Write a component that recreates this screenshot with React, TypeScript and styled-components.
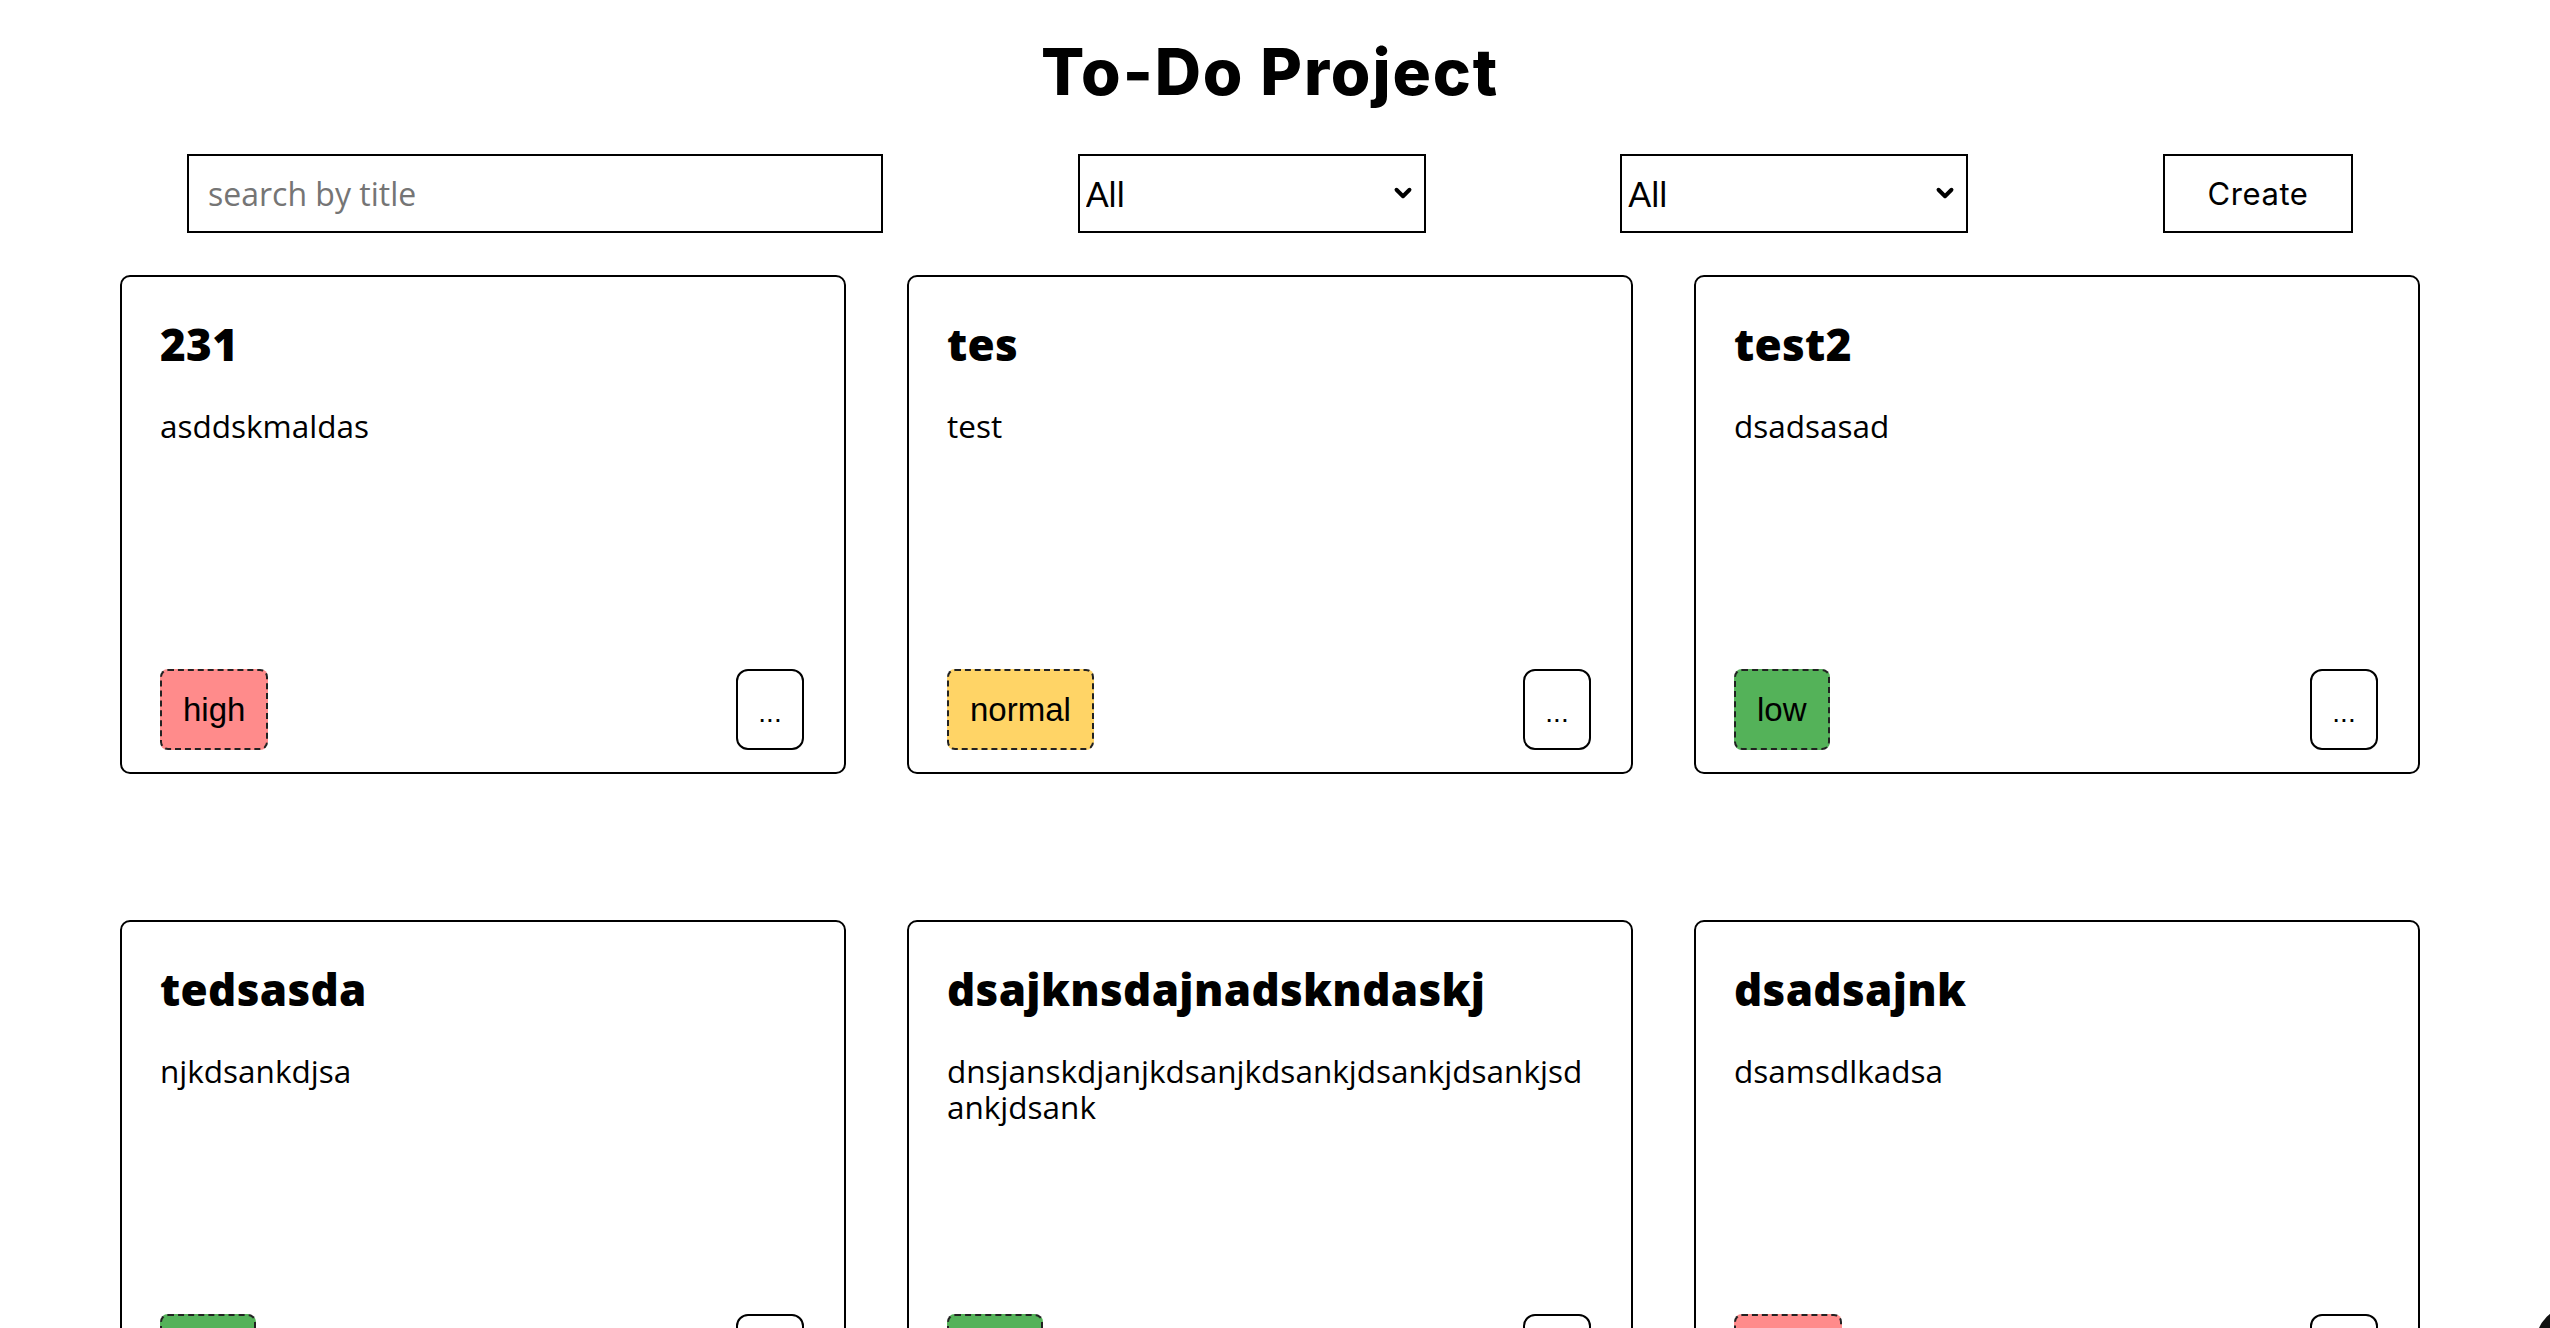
import styled, { createGlobalStyle } from "styled-components";
import { ChevronDown } from "lucide-react";

type Priority = "high" | "normal" | "low";

interface Todo {
  id: number;
  title: string;
  description: string;
  priority: Priority;
}

const todos: Todo[] = [
  { id: 1, title: "231", description: "asddskmaldas", priority: "high" },
  { id: 2, title: "tes", description: "test", priority: "normal" },
  { id: 3, title: "test2", description: "dsadsasad", priority: "low" },
  { id: 4, title: "tedsasda", description: "njkdsankdjsa", priority: "low" },
  {
    id: 5,
    title: "dsajknsdajnadskndaskj",
    description: "dnsjanskdjanjkdsanjkdsankjdsankjdsankjsdankjdsank",
    priority: "low",
  },
  { id: 6, title: "dsadsajnk", description: "dsamsdlkadsa", priority: "high" },
];

const tagColors: Record<Priority, string> = {
  high: "#ff8b8b",
  normal: "#ffd466",
  low: "#54b259",
};

const GlobalStyle = createGlobalStyle`
  html, body {
    margin: 0;
    padding: 0;
    background: #fff;
    overflow: hidden;
  }
  body {
    font-family: "Open Sans", sans-serif;
    color: #000;
  }
  * {
    box-sizing: border-box;
  }
`;

const Page = styled.div`
  padding: 0 130px 0 120px;
`;

const Title = styled.h1`
  margin: 34px 0 0;
  font-family: Inter, sans-serif;
  font-weight: 800;
  font-size: 64px;
  line-height: 1.2;
  letter-spacing: 1.9px;
  text-align: center;
`;

const Toolbar = styled.div`
  display: flex;
  align-items: center;
  justify-content: space-between;
  margin-top: 43px;
  padding: 0 67px;
`;

const SearchInput = styled.input`
  width: 696px;
  height: 79px;
  padding: 0 19px;
  border: 2px solid #000;
  border-radius: 0;
  font-family: "Open Sans", sans-serif;
  font-size: 32px;
  color: #000;
  outline: none;

  &::placeholder {
    color: #757575;
  }
`;

const SelectWrap = styled.div`
  position: relative;
  width: 348px;
  height: 79px;
`;

const Select = styled.select`
  appearance: none;
  width: 100%;
  height: 100%;
  padding: 0 50px 0 6px;
  border: 2px solid #000;
  border-radius: 0;
  background: #fff;
  font-family: Lato, sans-serif;
  font-size: 34px;
  color: #000;
`;

const Chevron = styled.span`
  position: absolute;
  right: 10px;
  top: 50%;
  transform: translateY(-50%);
  display: flex;
  pointer-events: none;
`;

const CreateButton = styled.button`
  width: 190px;
  height: 79px;
  border: 2px solid #000;
  border-radius: 0;
  background: #fff;
  font-family: Inter, sans-serif;
  font-size: 31px;
  letter-spacing: 0.6px;
  color: #000;
  cursor: pointer;
`;

const Grid = styled.div`
  display: grid;
  grid-template-columns: repeat(3, 1fr);
  column-gap: 61px;
  row-gap: 146px;
  margin-top: 42px;
`;

const Card = styled.div`
  display: flex;
  flex-direction: column;
  height: 499px;
  padding: 41px 40px 22px 38px;
  border: 2px solid #000;
  border-radius: 10px;
  background: #fff;
`;

const CardTitle = styled.h2`
  margin: 0;
  font-family: "Open Sans", sans-serif;
  font-weight: 800;
  font-size: 44px;
  line-height: 1.2;
  letter-spacing: 0.3px;
`;

const CardText = styled.p`
  margin: 37px 0 0;
  font-size: 31.5px;
  line-height: 1.15;
  word-break: break-all;
`;

const CardFooter = styled.div`
  display: flex;
  justify-content: space-between;
  align-items: stretch;
  margin-top: auto;
`;

const Tag = styled.span<{ $priority: Priority }>`
  padding: 20px 21px;
  border: 2px dashed #222;
  border-radius: 8px;
  background: ${(p) => tagColors[p.$priority]};
  font-family: "Liberation Sans", Arial, sans-serif;
  font-size: 33px;
  line-height: 37px;
`;

const MoreButton = styled.button`
  width: 68px;
  padding: 8px 0 0;
  border: 2px solid #000;
  border-radius: 12px;
  background: #fff;
  font-family: "Liberation Sans", Arial, sans-serif;
  font-size: 28px;
  color: #000;
  cursor: pointer;
`;

const CornerBlob = styled.div`
  position: fixed;
  right: -65px;
  bottom: -57px;
  width: 80px;
  height: 80px;
  border-radius: 50%;
  background: #111;
`;

const App: React.FC = () => {
  return (
    <Page>
      <GlobalStyle />
      <Title>To-Do Project</Title>
      <Toolbar>
        <SearchInput placeholder="search by title" />
        <SelectWrap>
          <Select defaultValue="all">
            <option value="all">All</option>
            <option value="high">high</option>
            <option value="normal">normal</option>
            <option value="low">low</option>
          </Select>
          <Chevron>
            <ChevronDown size={26} strokeWidth={3.6} color="#000" />
          </Chevron>
        </SelectWrap>
        <SelectWrap>
          <Select defaultValue="all">
            <option value="all">All</option>
            <option value="done">done</option>
            <option value="open">open</option>
          </Select>
          <Chevron>
            <ChevronDown size={26} strokeWidth={3.6} color="#000" />
          </Chevron>
        </SelectWrap>
        <CreateButton>Create</CreateButton>
      </Toolbar>
      <Grid>
        {todos.map((todo) => (
          <Card key={todo.id}>
            <CardTitle>{todo.title}</CardTitle>
            <CardText>{todo.description}</CardText>
            <CardFooter>
              <Tag $priority={todo.priority}>{todo.priority}</Tag>
              <MoreButton>...</MoreButton>
            </CardFooter>
          </Card>
        ))}
      </Grid>
      <CornerBlob />
    </Page>
  );
};

export default App;
